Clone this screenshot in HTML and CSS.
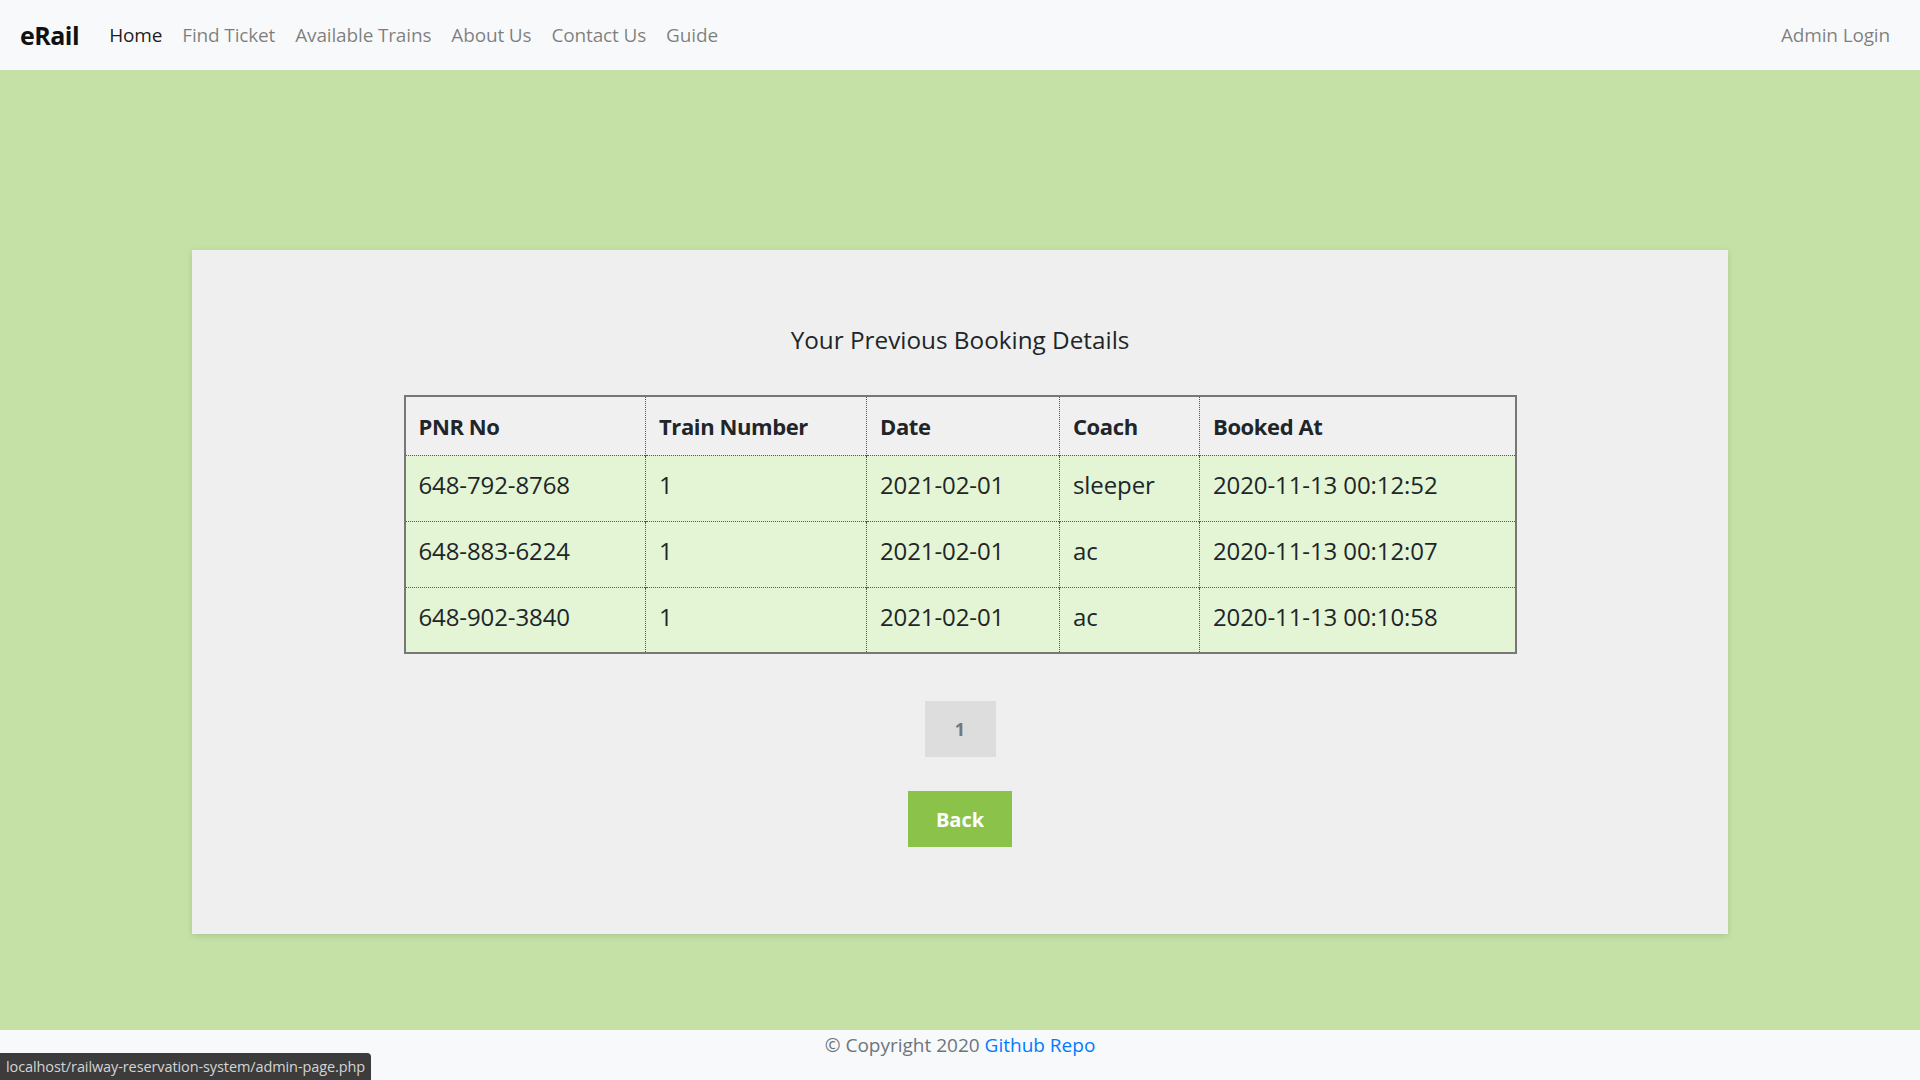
FILE: index.html
```html
<!DOCTYPE html>
<html lang="en">
<head>
<meta charset="utf-8">
<title>eRail - Previous Bookings</title>
<link rel="stylesheet" href="styles.css">
</head>
<body>
<nav class="navbar">
  <a class="brand" href="#">eRail</a>
  <ul class="nav-links">
    <li><a class="nav-link active" href="#">Home</a></li>
    <li><a class="nav-link" href="#">Find Ticket</a></li>
    <li><a class="nav-link" href="#">Available Trains</a></li>
    <li><a class="nav-link" href="#">About Us</a></li>
    <li><a class="nav-link" href="#">Contact Us</a></li>
    <li><a class="nav-link" href="#">Guide</a></li>
  </ul>
  <a class="nav-link admin" href="#">Admin Login</a>
</nav>

<main class="content">
  <section class="card">
    <h4 class="card-title">Your Previous Booking Details</h4>
    <table class="bookings">
      <colgroup>
        <col class="col-pnr">
        <col class="col-train">
        <col class="col-date">
        <col class="col-coach">
        <col class="col-booked">
      </colgroup>
      <thead>
        <tr>
          <th>PNR No</th>
          <th>Train Number</th>
          <th>Date</th>
          <th>Coach</th>
          <th>Booked At</th>
        </tr>
      </thead>
      <tbody>
        <tr>
          <td>648-792-8768</td>
          <td>1</td>
          <td>2021-02-01</td>
          <td>sleeper</td>
          <td>2020-11-13 00:12:52</td>
        </tr>
        <tr>
          <td>648-883-6224</td>
          <td>1</td>
          <td>2021-02-01</td>
          <td>ac</td>
          <td>2020-11-13 00:12:07</td>
        </tr>
        <tr>
          <td>648-902-3840</td>
          <td>1</td>
          <td>2021-02-01</td>
          <td>ac</td>
          <td>2020-11-13 00:10:58</td>
        </tr>
      </tbody>
    </table>
    <div class="pagination"><a class="page" href="#">1</a></div>
    <a class="btn-back" href="#">Back</a>
  </section>
</main>

<footer class="footer">
  <span>© Copyright 2020 <a href="#">Github Repo</a></span>
</footer>

<div class="status-bubble">localhost/railway-reservation-system/admin-page.php</div>
</body>
</html>
```

FILE: styles.css
```css
* { box-sizing: border-box; }

html, body {
  margin: 0;
  padding: 0;
}

body {
  font-family: "Open Sans", "Noto Sans", "Liberation Sans", sans-serif;
  font-size: 20px;
  color: #212529;
  background: #c5e1a5;
  min-height: 100vh;
  display: flex;
  flex-direction: column;
}

a { text-decoration: none; }

.navbar {
  height: 70px;
  background: #f8f9fa;
  display: flex;
  align-items: center;
  padding: 0 20px;
}

.brand {
  font-size: 25px;
  font-weight: 700;
  color: #111;
  margin-right: 20px;
  letter-spacing: -0.5px;
}

.nav-links {
  list-style: none;
  margin: 0;
  padding: 0;
  display: flex;
  flex: 1;
}

.nav-link {
  display: block;
  padding: 0 10px;
  color: rgba(0, 0, 0, 0.5);
  font-size: 19px;
  letter-spacing: -0.15px;
}

.nav-link.active { color: rgba(0, 0, 0, 0.9); }

.content {
  flex: 1;
  padding-top: 180px;
  padding-bottom: 96px;
}

.card {
  width: 80%;
  margin: 0 auto;
  background: #efefef;
  box-shadow: 0 2px 6px rgba(0, 0, 0, 0.12);
  padding: 73px 0 87px;
  display: flex;
  flex-direction: column;
  align-items: center;
}

.card-title {
  margin: 0 0 38px;
  font-size: 24.3px;
  font-weight: 500;
  line-height: 34px;
}

.bookings {
  width: 1111px;
  border-collapse: collapse;
  table-layout: fixed;
  border: 2px solid #777;
  font-size: 24px;
  letter-spacing: -0.1px;
}

.col-pnr { width: 241px; }
.col-train { width: 221px; }
.col-date { width: 193px; }
.col-coach { width: 140px; }
.col-booked { width: 316px; }

.bookings th,
.bookings td {
  text-align: left;
  padding: 0 13px;
  border-left: 1px dotted #555;
  border-top: 1px dotted #555;
}

.bookings th {
  height: 59px;
  font-weight: 700;
  background: #f0f0f0;
  font-size: 22px;
  letter-spacing: -0.4px;
}

.bookings td {
  height: 66px;
  padding-bottom: 7px;
  background: #e3f5d4;
}

.pagination {
  margin-top: 47px;
  display: flex;
}

.page {
  width: 71px;
  height: 56px;
  background: #dddddd;
  color: #777;
  font-weight: 700;
  font-size: 18px;
  display: flex;
  align-items: center;
  justify-content: center;
}

.btn-back {
  margin-top: 34px;
  width: 104px;
  height: 56px;
  background: #8bc34a;
  color: #fff;
  font-weight: 700;
  font-size: 20px;
  display: flex;
  align-items: center;
  justify-content: center;
}

.footer {
  height: 51px;
  background: #f8f9fa;
  display: flex;
  justify-content: center;
  padding-top: 2px;
  color: #6c757d;
  font-size: 19px;
}

.footer a { color: #007bff; }

.status-bubble {
  position: fixed;
  left: 0;
  bottom: 0;
  height: 27px;
  padding: 0 6px;
  background: #3c3c3c;
  color: #d4d4d4;
  font-size: 14.5px;
  line-height: 27px;
  border-radius: 0 4px 0 0;
  letter-spacing: -0.1px;
}
```
